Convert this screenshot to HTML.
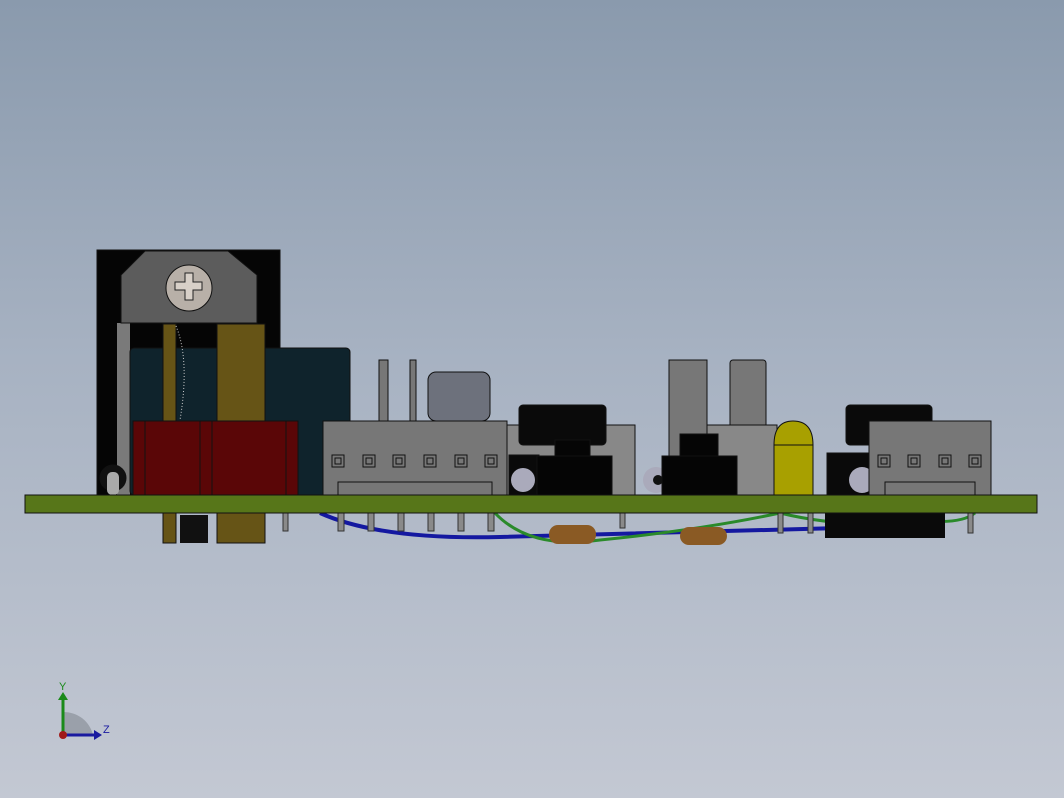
<!DOCTYPE html>
<html><head><style>
html,body{margin:0;padding:0}
body{width:1064px;height:798px;background:linear-gradient(#8a9aad 0%,#a7b2c2 45%,#c3c8d3 100%);overflow:hidden}
svg{display:block}
</style></head><body>
<svg width="1064" height="798" xmlns="http://www.w3.org/2000/svg" stroke="#111" stroke-width="1">
<!-- heatsink -->
<rect x="97" y="250" width="183" height="245" fill="#050505"/>
<rect x="117" y="323" width="13" height="172" fill="#7a7a7a" stroke="none"/>
<polygon points="145,251 228,251 257,275 257,323 121,323 121,275" fill="#5c5c5c"/>
<circle cx="189" cy="288" r="23" fill="#b8b0a8"/>
<path d="M185,273h8v9h9v8h-9v10h-8v-10h-10v-8h10z" fill="#d8d0c8" stroke="#222"/>
<!-- big teal cap -->
<rect x="130" y="348" width="220" height="147" rx="4" fill="#0f232c"/>
<!-- brass -->
<rect x="163" y="324" width="13" height="219" fill="#665416"/>
<rect x="217" y="324" width="48" height="219" fill="#665416"/>
<path d="M176,326 Q190,360 180,420" fill="none" stroke="#ccc" stroke-dasharray="1,2"/>
<rect x="180" y="515" width="28" height="28" fill="#111" stroke="none"/>
<!-- red block -->
<rect x="133" y="421" width="165" height="74" fill="#5a0607"/>
<line x1="145" y1="421" x2="145" y2="495"/><line x1="200" y1="421" x2="200" y2="495"/><line x1="212" y1="421" x2="212" y2="495"/><line x1="286" y1="421" x2="286" y2="495"/>
<circle cx="113" cy="478" r="13" fill="#111"/>
<rect x="107" y="472" width="12" height="23" rx="5" fill="#aaa" stroke="none"/>
<!-- wires -->
<path d="M320,513 Q380,540 500,537 L840,528" fill="none" stroke="#1418a0" stroke-width="4"/>
<path d="M495,513 Q530,550 600,540 Q700,530 780,513 Q850,530 920,520 Q960,525 975,513" fill="none" stroke="#2a8a2a" stroke-width="3"/>
<rect x="549" y="525" width="47" height="19" rx="9" fill="#8a5a24" stroke="none"/>
<rect x="680" y="527" width="47" height="18" rx="9" fill="#8a5a24" stroke="none"/>
<rect x="825" y="513" width="120" height="25" fill="#0a0a0a" stroke="none"/>
<g fill="#8a8a8a" stroke="#333">
<rect x="338" y="513" width="6" height="18"/><rect x="368" y="513" width="6" height="18"/><rect x="398" y="513" width="6" height="18"/><rect x="428" y="513" width="6" height="18"/><rect x="458" y="513" width="6" height="18"/><rect x="488" y="513" width="6" height="18"/>
<rect x="283" y="513" width="5" height="18"/><rect x="620" y="513" width="5" height="15"/><rect x="778" y="513" width="5" height="20"/><rect x="808" y="513" width="5" height="20"/><rect x="968" y="513" width="5" height="20"/>
</g>
<!-- gray connector left -->
<rect x="379" y="360" width="9" height="61" fill="#777"/><rect x="410" y="360" width="6" height="61" fill="#777"/>
<rect x="428" y="372" width="62" height="49" rx="8" fill="#6d717c"/>
<rect x="323" y="421" width="184" height="74" fill="#777"/>
<rect x="338" y="482" width="154" height="13" fill="#777"/>
<g fill="#777" stroke="#111"><rect x="332" y="455" width="12" height="12"/><rect x="363" y="455" width="12" height="12"/><rect x="393" y="455" width="12" height="12"/><rect x="424" y="455" width="12" height="12"/><rect x="455" y="455" width="12" height="12"/><rect x="485" y="455" width="12" height="12"/>
<rect x="335" y="458" width="6" height="6"/><rect x="366" y="458" width="6" height="6"/><rect x="396" y="458" width="6" height="6"/><rect x="427" y="458" width="6" height="6"/><rect x="458" y="458" width="6" height="6"/><rect x="488" y="458" width="6" height="6"/></g>
<!-- relay 1 -->
<rect x="507" y="425" width="128" height="70" fill="#888"/>
<rect x="509" y="455" width="30" height="40" fill="#0a0a0a"/>
<circle cx="523" cy="480" r="12" fill="#aab" stroke="none"/>
<rect x="519" y="405" width="87" height="40" rx="4" fill="#0a0a0a"/>
<rect x="555" y="440" width="35" height="20" fill="#050505"/>
<rect x="537" y="456" width="75" height="39" fill="#050505"/>
<!-- middle -->
<rect x="669" y="360" width="38" height="135" fill="#777"/>
<rect x="730" y="360" width="36" height="135" rx="3" fill="#777"/>
<rect x="707" y="425" width="70" height="70" fill="#888"/>
<circle cx="656" cy="480" r="13" fill="#aab" stroke="none"/>
<circle cx="658" cy="480" r="5" fill="#111" stroke="none"/>
<rect x="680" y="434" width="38" height="25" fill="#050505"/>
<rect x="662" y="456" width="75" height="39" fill="#050505"/>
<path d="M774,495 V445 Q774,421 793,421 Q813,421 813,445 V495Z" fill="#a8a000"/>
<line x1="774" y1="445" x2="813" y2="445"/>
<!-- relay 2 -->
<rect x="827" y="453" width="45" height="42" fill="#0a0a0a"/>
<circle cx="862" cy="480" r="13" fill="#aab" stroke="none"/>
<rect x="846" y="405" width="86" height="40" rx="4" fill="#0a0a0a"/>
<rect x="869" y="421" width="122" height="74" fill="#777"/>
<rect x="885" y="482" width="90" height="13" fill="#777"/>
<g fill="#777" stroke="#111"><rect x="878" y="455" width="12" height="12"/><rect x="908" y="455" width="12" height="12"/><rect x="939" y="455" width="12" height="12"/><rect x="969" y="455" width="12" height="12"/>
<rect x="881" y="458" width="6" height="6"/><rect x="911" y="458" width="6" height="6"/><rect x="942" y="458" width="6" height="6"/><rect x="972" y="458" width="6" height="6"/></g>
<!-- PCB -->
<rect x="25" y="495" width="1012" height="18" fill="#577619"/>
<!-- triad -->
<path d="M63,712 A30,30 0 0 1 93,735 H63Z" fill="#9aa0aa" stroke="none"/>
<line x1="63" y1="735" x2="63" y2="698" stroke="#1a8a1a" stroke-width="3"/>
<polygon points="58,700 63,692 68,700" fill="#1a8a1a" stroke="none"/>
<line x1="63" y1="735" x2="96" y2="735" stroke="#1a1aa0" stroke-width="3"/>
<polygon points="94,730 102,735 94,740" fill="#1a1aa0" stroke="none"/>
<circle cx="63" cy="735" r="4" fill="#a01a1a" stroke="none"/>
<text x="59" y="690" font-family="Liberation Sans,sans-serif" font-size="11" fill="#1a8a1a" stroke="none">Y</text>
<text x="103" y="733" font-family="Liberation Sans,sans-serif" font-size="11" fill="#1a1aa0" stroke="none">Z</text>
</svg>
</body></html>
